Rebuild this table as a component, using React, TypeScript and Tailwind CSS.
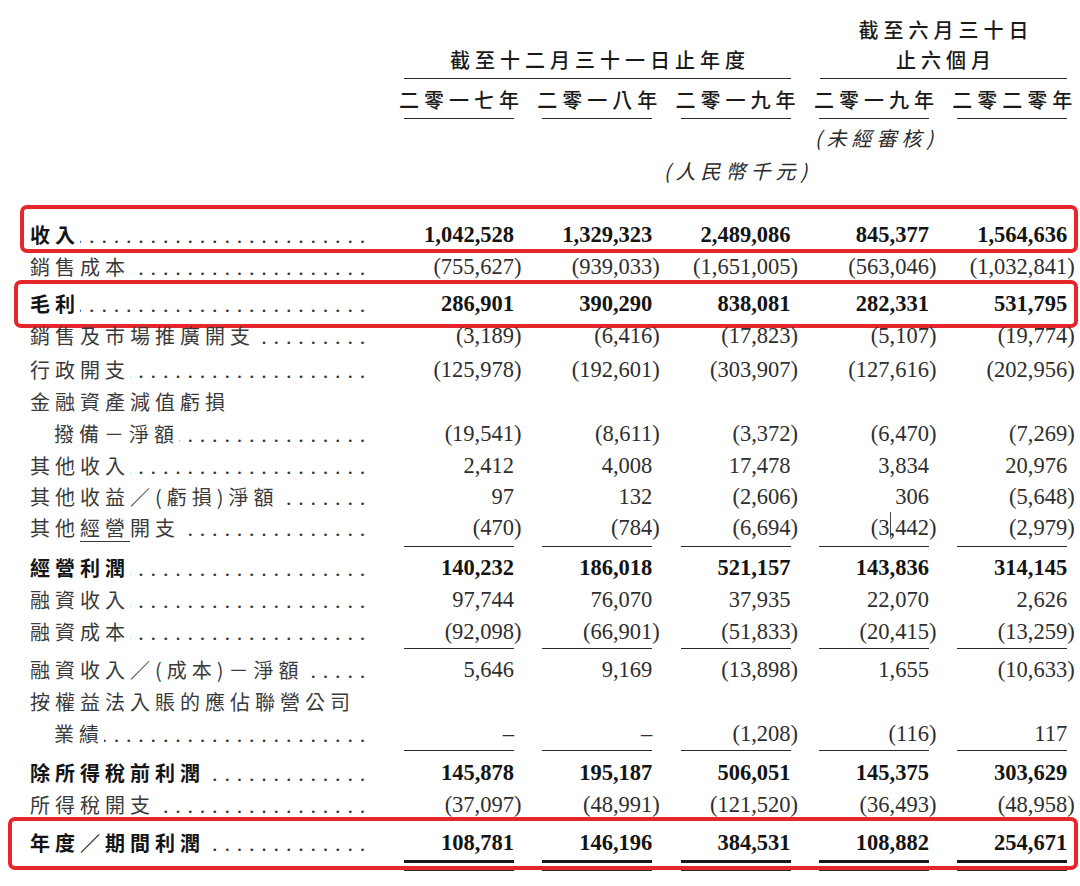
import React from 'react';

const CJK = "font-['Noto_Sans_CJK_TC','Noto_Sans_CJK_SC',sans-serif]";
const SERIF = "font-['Liberation_Serif','Times_New_Roman',serif]";

type Row = {
  label: React.ReactNode;
  vals?: string[];
  bold?: boolean;
  indent?: boolean;
  noDots?: boolean;
  cls?: string;
  box?: string;
};

const rows: Row[] = [
  { label: '收入', bold: true, vals: ['1,042,528', '1,329,323', '2,489,086', '845,377', '1,564,636'], box: 'top-[-14px] bottom-[-2px] left-[20px] right-[2px]' },
  { label: '銷售成本', vals: ['(755,627)', '(939,033)', '(1,651,005)', '(563,046)', '(1,032,841)'] },
  { label: '毛利', bold: true, cls: 'mt-[5px]', vals: ['286,901', '390,290', '838,081', '282,331', '531,795'], box: 'top-[-8px] bottom-[-8px] left-[14px] right-[2px]' },
  { label: '銷售及市場推廣開支', vals: ['(3,189)', '(6,416)', '(17,823)', '(5,107)', '(19,774)'] },
  { label: '行政開支', cls: 'mt-[2px]', vals: ['(125,978)', '(192,601)', '(303,907)', '(127,616)', '(202,956)'] },
  { label: '金融資產減值虧損', noDots: true },
  { label: '撥備－淨額', indent: true, vals: ['(19,541)', '(8,611)', '(3,372)', '(6,470)', '(7,269)'] },
  { label: '其他收入', vals: ['2,412', '4,008', '17,478', '3,834', '20,976'] },
  { label: '其他收益／(虧損)淨額', cls: 'h-[30px]', vals: ['97', '132', '(2,606)', '306', '(5,648)'] },
  {
    label: (
      <>
        其他<span className="underline underline-offset-[5px] decoration-1">經營</span>開支
      </>
    ),
    vals: ['(470)', '(784)', '(6,694)', '(3,442)', '(2,979)'],
  },
  { label: 'LINE', cls: 'mt-[2px]' },
  { label: '經營利潤', bold: true, cls: 'mt-[5px]', vals: ['140,232', '186,018', '521,157', '143,836', '314,145'] },
  { label: '融資收入', vals: ['97,744', '76,070', '37,935', '22,070', '2,626'] },
  { label: '融資成本', vals: ['(92,098)', '(66,901)', '(51,833)', '(20,415)', '(13,259)'] },
  { label: 'LINE', cls: 'mt-0' },
  { label: '融資收入／(成本)－淨額', cls: 'mt-[5px]', vals: ['5,646', '9,169', '(13,898)', '1,655', '(10,633)'] },
  { label: '按權益法入賬的應佔聯營公司', noDots: true },
  { label: '業績', indent: true, vals: ['–', '–', '(1,208)', '(116)', '117'] },
  { label: 'LINE', cls: 'mt-0' },
  { label: '除所得稅前利潤', bold: true, cls: 'mt-[6px]', vals: ['145,878', '195,187', '506,051', '145,375', '303,629'] },
  { label: '所得稅開支', vals: ['(37,097)', '(48,991)', '(121,520)', '(36,493)', '(48,958)'] },
  { label: '年度／期間利潤', bold: true, cls: 'mt-[6px]', vals: ['108,781', '146,196', '384,531', '108,882', '254,671'], box: 'top-[-10px] bottom-[-11px] left-[8px] right-[2px]' },
];

function Num({ v }: { v: string }) {
  if (v === '(3,442)') {
    return (
      <>
        (3
        <span className="relative">
          <span className="absolute left-[0px] top-[-3px] h-[25px] w-px bg-[#444]" />
        </span>
        ,442<span className="mr-[-7.5px]">)</span>
      </>
    );
  }
  if (v.startsWith('(')) {
    return (
      <>
        {v.slice(0, -1)}
        <span className="mr-[-7.5px]">)</span>
      </>
    );
  }
  return <>{v}</>;
}

function Cols({ children, className = '' }: { children: React.ReactNode; className?: string }) {
  return <div className={`ml-[404px] flex gap-[28.3px] ${className}`}>{children}</div>;
}

function ColLines({ cls }: { cls?: string }) {
  return (
    <Cols className={cls}>
      {[0, 1, 2, 3, 4].map((i) => (
        <div key={i} className="w-[110px] h-px bg-[#2a2a2a]" />
      ))}
    </Cols>
  );
}

function DataRow({ r }: { r: Row }) {
  const textColor = r.bold ? 'text-[#141414] font-bold' : 'text-[#3a3a3a] font-normal';
  return (
    <div className={`relative flex items-center ${r.cls?.includes('h-[') ? '' : 'h-[32px]'} ${r.cls ?? ''}`}>
      <div className="ml-[30px] w-[342px] flex items-baseline">
        <span
          className={`${CJK} ${textColor} text-[20px] leading-[28px] tracking-[5px] whitespace-nowrap shrink-0 ${
            r.indent ? 'ml-[24px]' : ''
          }`}
        >
          {r.label}
        </span>
        {!r.noDots && (
          <span className="flex-1 min-w-0 overflow-hidden flex justify-end">
            <span className={`${SERIF} text-[22px] leading-[28px] tracking-[6.8px] text-[#333] whitespace-nowrap shrink-0`}>
              {'.'.repeat(40)}
            </span>
          </span>
        )}
      </div>
      {r.vals && (
        <div className="ml-[32px] flex gap-[28.3px]">
          {r.vals.map((v, i) => (
            <div
              key={i}
              className={`${SERIF} w-[110px] text-right text-[22.5px] leading-[28px] whitespace-nowrap ${
                r.bold ? 'font-bold text-[#141414]' : 'text-[#2e2e2e]'
              }`}
            >
              <Num v={v} />
            </div>
          ))}
        </div>
      )}
      {r.box && (
        <div className={`absolute ${r.box} border-[4px] border-[#e6262a] rounded-[7px] pointer-events-none`} />
      )}
    </div>
  );
}

export default function App() {
  const years = ['二零一七年', '二零一八年', '二零一九年', '二零一九年', '二零二零年'];
  return (
    <div className="w-[1080px] h-[886px] bg-white overflow-hidden relative">
      <div className={`${CJK} text-[20px] text-[#1a1a1a] font-medium`}>
        <div className="flex h-[30px] mt-[15px] items-center">
          <div className="ml-[820px] w-[247px] flex justify-center">
            <span className="tracking-[5px] pl-[5px] whitespace-nowrap">截至六月三十日</span>
          </div>
        </div>
        <div className="flex h-[30px] items-center">
          <div className="ml-[404px] w-[387px] flex justify-center">
            <span className="tracking-[5px] pl-[5px] whitespace-nowrap">截至十二月三十一日止年度</span>
          </div>
          <div className="ml-[29px] w-[247px] flex justify-center">
            <span className="tracking-[5px] pl-[5px] whitespace-nowrap">止六個月</span>
          </div>
        </div>
        <div className="flex mt-[3px]">
          <div className="ml-[404px] w-[387px] h-px bg-[#2a2a2a]" />
          <div className="ml-[29px] w-[247px] h-px bg-[#2a2a2a]" />
        </div>
        <Cols className="h-[30px] mt-[6px] items-center">
          {years.map((y, i) => (
            <div key={i} className="w-[110px] flex justify-center">
              <span className="whitespace-nowrap tracking-[5px] pl-[5px]">{y}</span>
            </div>
          ))}
        </Cols>
        <ColLines cls="mt-[3px]" />
        <Cols className="h-[26px] mt-[6px] items-center">
          <div className="w-[110px]" />
          <div className="w-[110px]" />
          <div className="w-[110px]" />
          <div className="w-[110px] flex justify-center">
            <span className="italic font-normal text-[#2a2a2a] whitespace-nowrap tracking-[5px] pl-[5px]">(未經審核)</span>
          </div>
          <div className="w-[110px]" />
        </Cols>
        <Cols className="h-[26px] mt-[7px] items-center">
          <div className="w-[110px]" />
          <div className="w-[110px]" />
          <div className="w-[110px] flex justify-center">
            <span className="italic font-normal text-[#2a2a2a] whitespace-nowrap tracking-[5px] pl-[5px]">(人民幣千元)</span>
          </div>
          <div className="w-[110px]" />
          <div className="w-[110px]" />
        </Cols>
      </div>

      <div className="mt-[35px]">
        {rows.map((r, i) =>
          r.label === 'LINE' ? <ColLines key={i} cls={r.cls} /> : <DataRow key={i} r={r} />
        )}
        <Cols className="mt-[1px]">
          {[0, 1, 2, 3, 4].map((i) => (
            <div key={i} className="w-[110px] h-[3px] bg-[#1a1a1a]" />
          ))}
        </Cols>
        <Cols className="mt-[7px]">
          {[0, 1, 2, 3, 4].map((i) => (
            <div key={i} className="w-[110px] h-px bg-[#2a2a2a]" />
          ))}
        </Cols>
      </div>
    </div>
  );
}
